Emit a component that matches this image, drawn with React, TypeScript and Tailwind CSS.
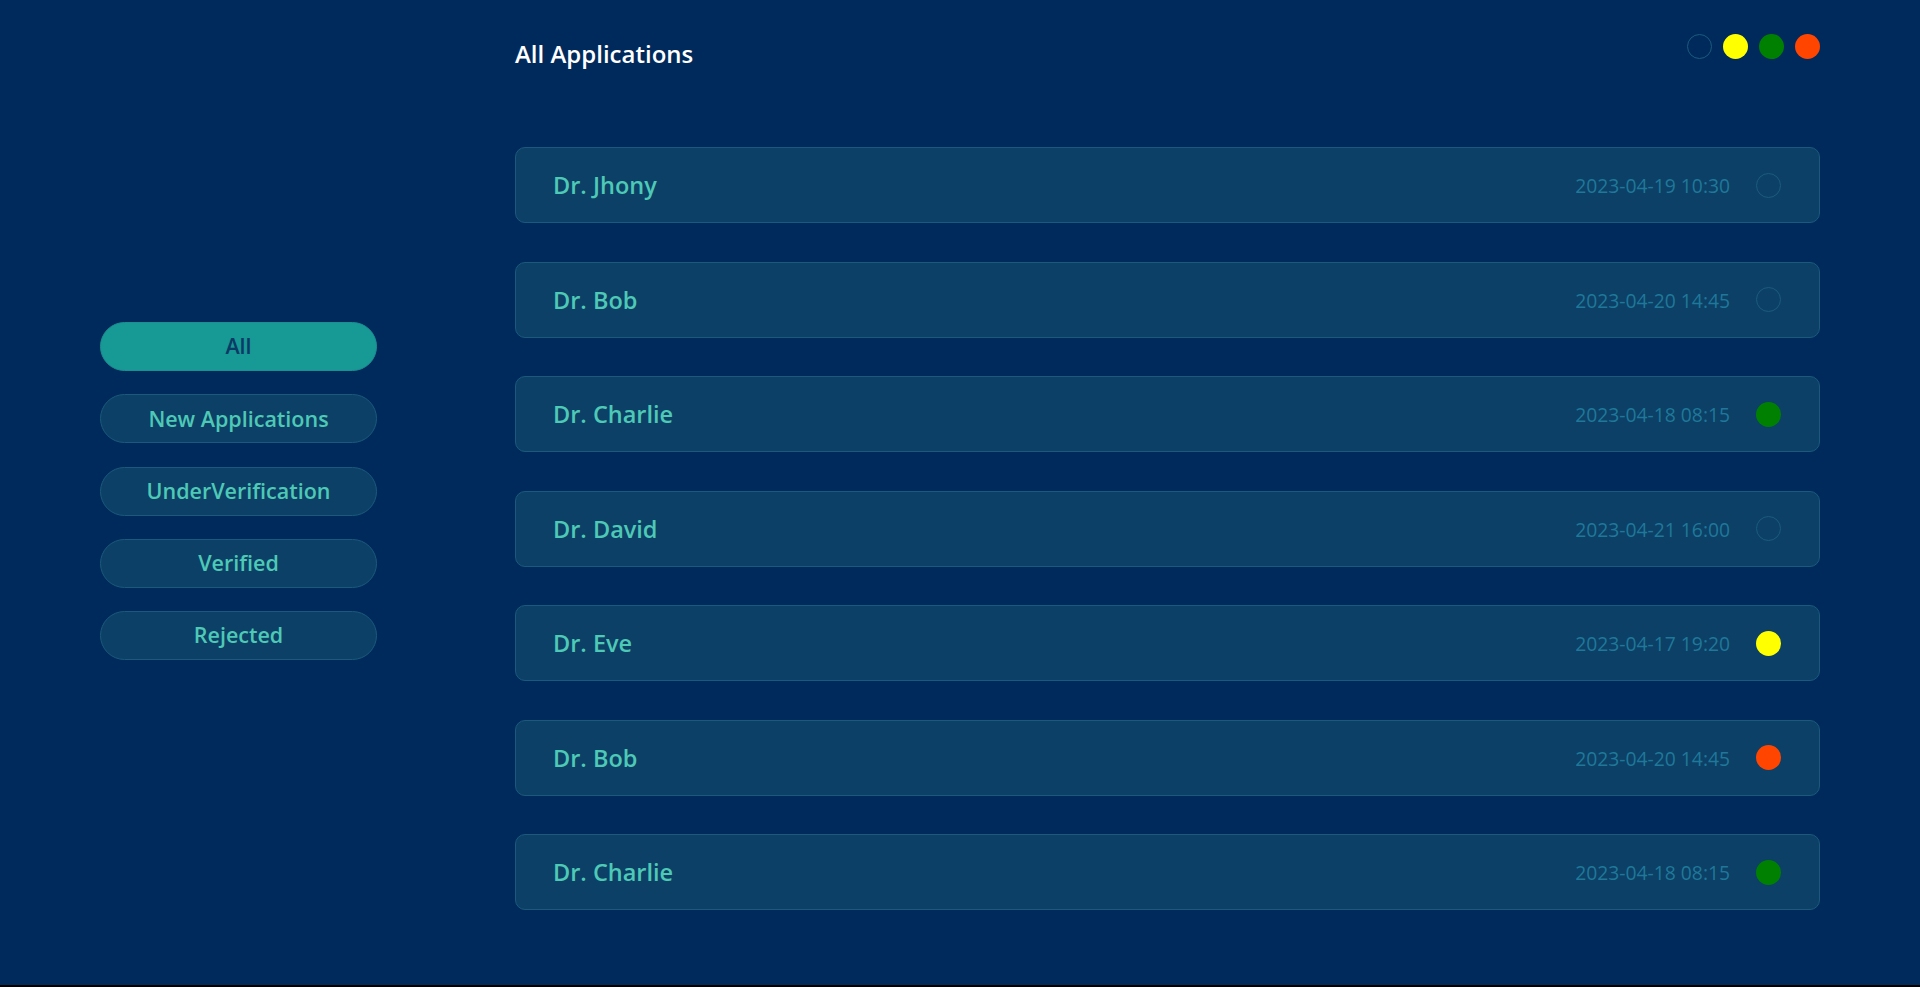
import { useState } from "react";

type Status = "none" | "pending" | "verified" | "rejected";

const apps: { name: string; date: string; status: Status }[] = [
  { name: "Dr. Jhony", date: "2023-04-19 10:30", status: "none" },
  { name: "Dr. Bob", date: "2023-04-20 14:45", status: "none" },
  { name: "Dr. Charlie", date: "2023-04-18 08:15", status: "verified" },
  { name: "Dr. David", date: "2023-04-21 16:00", status: "none" },
  { name: "Dr. Eve", date: "2023-04-17 19:20", status: "pending" },
  { name: "Dr. Bob", date: "2023-04-20 14:45", status: "rejected" },
  { name: "Dr. Charlie", date: "2023-04-18 08:15", status: "verified" },
];

const filters = ["All", "New Applications", "UnderVerification", "Verified", "Rejected"];

function Dot({ status }: { status: Status }) {
  if (status === "pending") return <div className="w-[25px] h-[25px] rounded-full bg-[#ffff00]" />;
  if (status === "verified") return <div className="w-[25px] h-[25px] rounded-full bg-[#008000]" />;
  if (status === "rejected") return <div className="w-[25px] h-[25px] rounded-full bg-[#ff4500]" />;
  return <div className="w-[25px] h-[25px] rounded-full border border-[#1b5b7e]" />;
}

export default function App() {
  const [active, setActive] = useState("All");

  return (
    <div className="h-screen bg-black font-['Open_Sans',sans-serif]">
      <div className="h-[985px] bg-[#002a5c] flex">
        {/* Sidebar */}
        <aside className="w-[515px] shrink-0 flex items-center pl-[100px]">
          <div className="flex flex-col gap-[23.25px] mb-[3px]">
            {filters.map((f) => (
              <button
                key={f}
                onClick={() => setActive(f)}
                className={
                  active === f
                    ? "w-[277px] h-[49px] rounded-full bg-[#179995] border border-[#1c8f93] text-[#0b3a64] text-[21.5px] font-semibold"
                    : "w-[277px] h-[49px] rounded-full bg-[#0c4066] border border-[#1b5a7c] text-[#4ec9b6] text-[21.5px] font-semibold"
                }
              >
                {f}
              </button>
            ))}
          </div>
        </aside>

        {/* Main */}
        <main className="flex-1 pr-[100px] pt-[34px]">
          <div className="flex items-start justify-between">
            <h1 className="text-white text-[24px] font-semibold leading-normal mt-[2px]">All Applications</h1>
            <div className="flex gap-[11px]">
              <Dot status="none" />
              <Dot status="pending" />
              <Dot status="verified" />
              <Dot status="rejected" />
            </div>
          </div>

          <div className="mt-[75px] flex flex-col gap-[38.5px]">
            {apps.map((a, i) => (
              <div
                key={i}
                className="h-[76px] rounded-[10px] bg-[#0c4066] border border-[#1b5a7c] flex items-center pl-[37px] pr-[38px]"
              >
                <span className="flex-1 text-[#4ec9b6] text-[23.5px] font-semibold mt-[2px]">{a.name}</span>
                <span className="text-[#1f7899] text-[19.3px] mr-[26px] mt-[3px]">{a.date}</span>
                <Dot status={a.status} />
              </div>
            ))}
          </div>
        </main>
      </div>
    </div>
  );
}
